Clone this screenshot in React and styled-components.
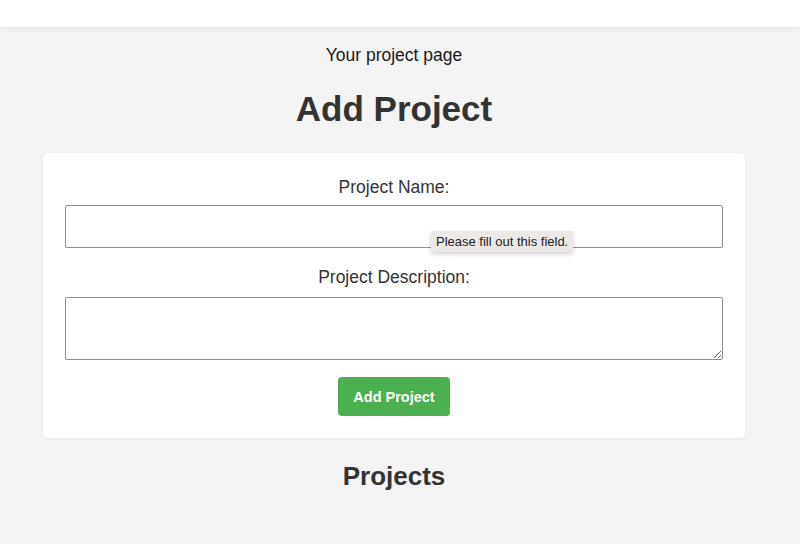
import React from "react";
import styled, { createGlobalStyle } from "styled-components";

const GlobalStyle = createGlobalStyle`
    body {
        margin: 0;
        background: #f4f4f4;
        font-family: "Liberation Sans", Arial, sans-serif;
        color: #333;
    }
`;

const TopBar = styled.header`
    height: 27px;
    background: #fff;
    box-shadow: 0 2px 6px rgba(0, 0, 0, 0.06);
`;

// room on the right, the page sits a little left of centre
const Main = styled.main`
    display: flex;
    flex-direction: column;
    align-items: center;
    padding-right: 12px;
`;

const Intro = styled.p`
    margin: 18px 0 0;
    font-size: 17.5px;
    line-height: 20px;
    color: #1a1a1a;
`;

const Title = styled.h2`
    margin: 24px 0 0;
    font-size: 35px;
    line-height: 40px;
    font-weight: bold;
    color: #333;
`;

const Card = styled.form`
    position: relative;
    box-sizing: border-box;
    width: 702px;
    margin-top: 24px;
    padding: 24px 22px 22px;
    background: #fff;
    border-radius: 5px;
    box-shadow: 0 1px 4px rgba(0, 0, 0, 0.06);
    display: flex;
    flex-direction: column;
    align-items: center;
`;

const Label = styled.label`
    font-size: 17.5px;
    line-height: 20px;
    color: #333;
    margin-top: ${props => props.$first ? "0" : "19px"};
    margin-bottom: ${props => props.$first ? "8px" : "10px"};
`;

const Input = styled.input`
    box-sizing: border-box;
    width: 100%;
    height: 43px;
    border: 1px solid #8f8f95;
    border-radius: 2px;
    background: #fff;
    font: inherit;
    padding: 0 8px;
    outline: none;
`;

const TextArea = styled.textarea`
    box-sizing: border-box;
    width: 100%;
    height: 63px;
    border: 1px solid #8f8f95;
    border-radius: 2px;
    font: inherit;
    padding: 8px;
    outline: none;
    resize: vertical;
    display: block;
`;

const Button = styled.button`
    margin-top: 17px;
    width: 112px;
    height: 39px;
    border: none;
    border-radius: 4px;
    background: #4caf50;
    color: #fff;
    font-family: "Liberation Sans", Arial, sans-serif;
    font-size: 14.5px;
    font-weight: bold;
    cursor: pointer;
`;

// the browser's "required" bubble
const Tooltip = styled.div`
    position: absolute;
    left: 388px;
    top: 78px;
    padding: 3px 5px;
    background: #ebe8e5;
    color: #222;
    font-size: 13px;
    line-height: 15px;
    border-radius: 2px;
    box-shadow: 0 2px 5px rgba(0, 0, 0, 0.18);
    white-space: nowrap;
`;

const SubTitle = styled.h3`
    margin: 23px 0 0;
    font-size: 26px;
    line-height: 30px;
    font-weight: bold;
    color: #333;
`;

const App = () => {
    return (
        <>
            <GlobalStyle />
            <TopBar />
            <Main>
                <Intro>Your project page</Intro>
                <Title>Add Project</Title>
                <Card onSubmit={e => e.preventDefault()}>
                    <Label $first htmlFor="name">Project Name:</Label>
                    <Input id="name" type="text" />
                    <Label htmlFor="desc">Project Description:</Label>
                    <TextArea id="desc" />
                    <Button type="submit">Add Project</Button>
                    <Tooltip>Please fill out this field.</Tooltip>
                </Card>
                <SubTitle>Projects</SubTitle>
            </Main>
        </>
    );
};

export default App;
